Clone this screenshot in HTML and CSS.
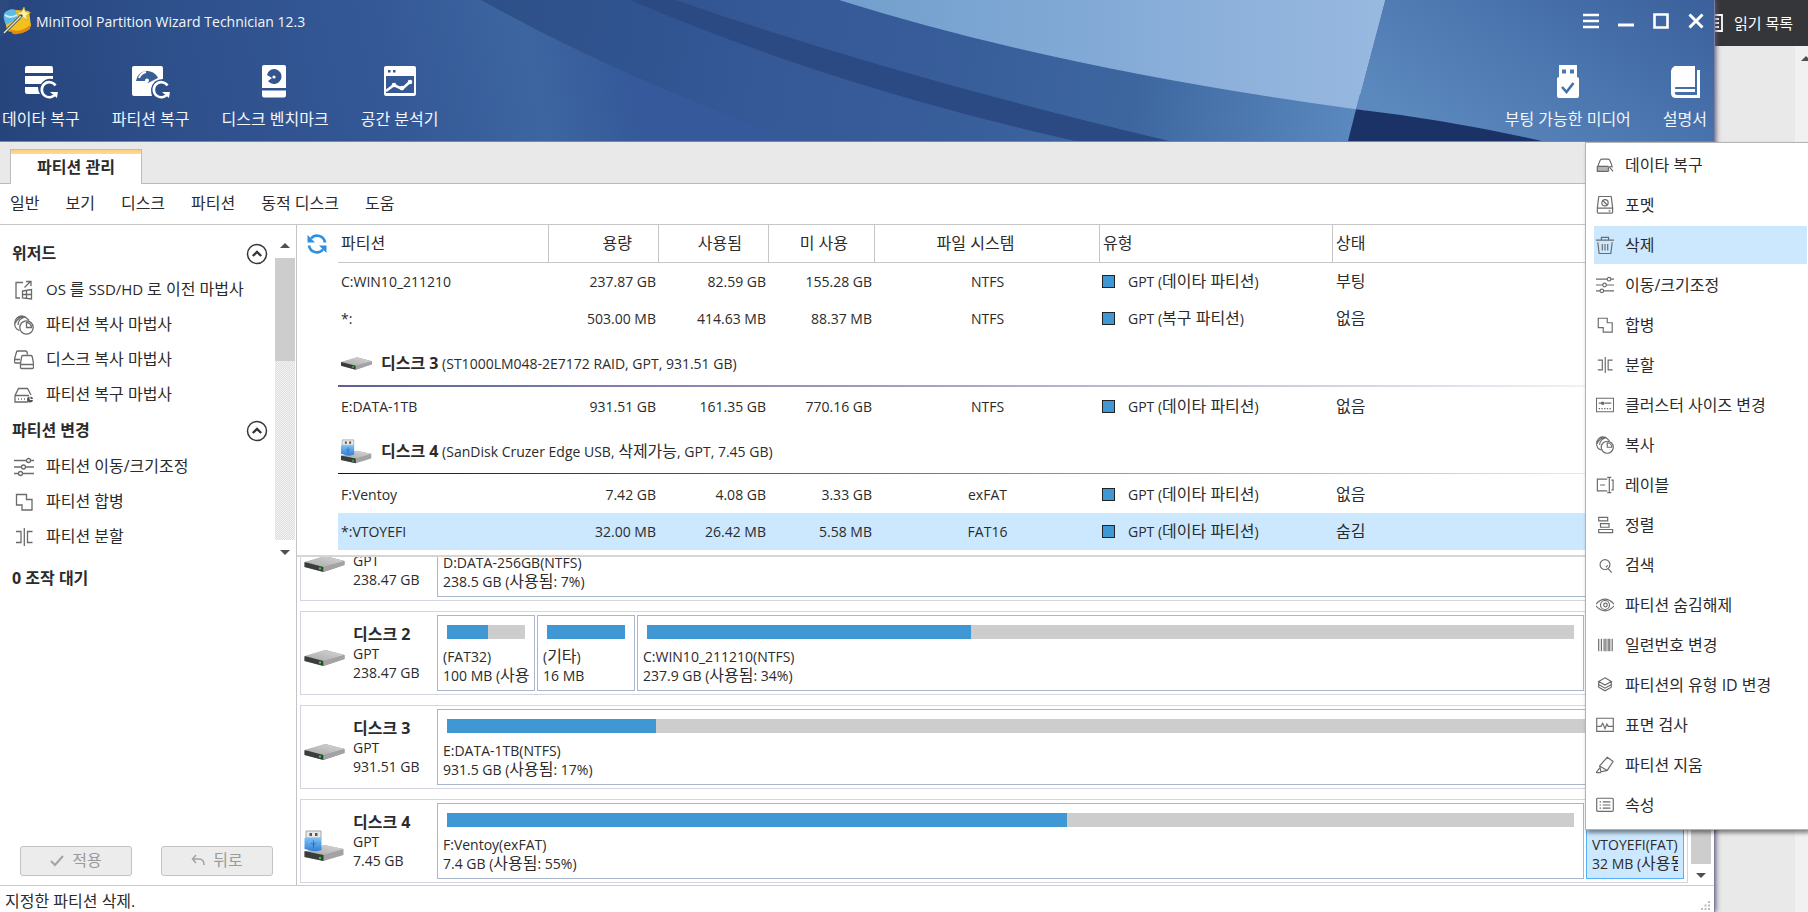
FILE: index.html
```html
<!DOCTYPE html>
<html lang="ko">
<head>
<meta charset="utf-8">
<title>MiniTool Partition Wizard Technician 12.3</title>
<link rel="stylesheet" href="styles.css">
</head>
<body>
<svg class="defs" aria-hidden="true">
  <defs>
    <linearGradient id="gTop" x1="0" x2="1" y1="1" y2="0"><stop offset="0" stop-color="#a9a9a9"/><stop offset="1" stop-color="#d6d6d6"/></linearGradient>
    <linearGradient id="gUsb" x1="0" x2="0" y1="0" y2="1"><stop offset="0" stop-color="#7cc0f2"/><stop offset="1" stop-color="#2f7fd6"/></linearGradient>
    <linearGradient id="gBase" gradientUnits="userSpaceOnUse" x1="0" x2="620" y1="142" y2="20"><stop offset="0" stop-color="#26447c"/><stop offset=".35" stop-color="#2f528e"/><stop offset=".62" stop-color="#345896"/><stop offset=".85" stop-color="#3d66a0"/><stop offset="1" stop-color="#35599a"/></linearGradient>
    <linearGradient id="gMid" gradientUnits="userSpaceOnUse" x1="480" x2="1350" y1="0" y2="141"><stop offset="0" stop-color="#2e5089"/><stop offset=".2" stop-color="#305490"/><stop offset=".33" stop-color="#355997"/><stop offset=".5" stop-color="#375c99"/><stop offset=".75" stop-color="#3d669f"/><stop offset="1" stop-color="#5a89bf"/></linearGradient>
    <linearGradient id="gLight" x1="0" x2="1" y1="0" y2="0"><stop offset="0" stop-color="#729fcd"/><stop offset=".4" stop-color="#80a8d5"/><stop offset="1" stop-color="#98b9e0"/></linearGradient>
    <linearGradient id="gRight" x1="0" x2="1" y1="0.6" y2="0"><stop offset="0" stop-color="#5b88bd"/><stop offset=".5" stop-color="#4a75ae"/><stop offset="1" stop-color="#3b609c"/></linearGradient>
  </defs>
  <symbol id="i-harddisk" viewBox="0 0 40 18"><path d="M0 8 21 1 40 6v4L19 17 0 12z" fill="#9c9c9c"/><path d="M0 7 20 1l20 5-21 6z" fill="url(#gTop)"/><path d="M0 7l19 5v5L0 12z" fill="#3b3d3c"/><path d="M19 12l21-6v4L19 17z" fill="#a3a3a3"/><circle cx="15.500" cy="13.500" r="1.200" fill="#21d13c"/></symbol>
  <symbol id="i-usbdisk" viewBox="0 0 40 32"><path d="M0 22 20 15l19 4v6L19 31 0 27z" fill="#a3a3a3"/><path d="M0 22 20 15l19 4-20 6z" fill="url(#gTop)"/><path d="M0 21l19 4v6L0 27z" fill="#3b3d3c"/><circle cx="15.500" cy="28" r="1.200" fill="#21d13c"/><path d="M1.500 1h15v7h-15z" fill="#e8e8e8" stroke="#a5a5a5"/><path d="M5 3h2.500v3H5zM10.500 3H13v3h-2.500z" fill="#555"/><path d="M0 8h17v12q-5 2-9 1l-8-2z" fill="url(#gUsb)"/><path d="M9 10.500v7.500M6.500 13l2.500 2M11.500 12.500 9 15" stroke="#2a70c4" fill="none"/></symbol>
  <symbol id="i-recover" viewBox="0 0 20 20"><path d="M2 11.500 4.500 5q.5-1.500 2-1.500h7q1.500 0 2 1.500L18 11.500" class="s"/><path d="M1 11h13v6H1z" fill="#b5b5b5"/><path d="M1.500 11v6H14M1.500 11.500H14" class="s"/><path d="M14.500 16.500a2.800 2.800 0 0 1 4-4M15.500 13l3.500 4" class="s"/></symbol>
  <symbol id="i-restore" viewBox="0 0 20 20"><path d="M1 10.500 4.500 3.500h9L17 10M1 10.500h14M1 10.500v6.500h13M4 14h1M7 14h1M10 14h1" class="s"/><circle cx="16" cy="14.500" r="3" fill="#555"/><path d="M16 11v3.500h3.500" stroke="#fff" fill="none"/></symbol>
  <symbol id="i-format" viewBox="0 0 20 20"><path d="M3 1q.2-.5 1-.5h12q.8 0 1 .5l1.500 12.500V18q0 1-1 1h-15q-1 0-1-1v-4.500zM1.500 13.500h17M14 16.500h2" class="s"/><circle cx="10" cy="7.500" r="3.500" class="s"/><path d="M7.500 5l5 5" class="s"/></symbol>
  <symbol id="i-trash" viewBox="0 0 20 20"><path d="M0 4.500h20M6 4V1.500h8V4M2 7l1.500 12.500h13L18 7M7 9v7M10 9v7M13 9v7" class="s"/></symbol>
  <symbol id="i-sliders" viewBox="0 0 20 20"><path d="M0 3.500h12.500M16.500 3.500H20M0 10h7.500M11.500 10H20M0 16.500h4.500M8.500 16.500H20" class="s"/><circle cx="14.500" cy="3.500" r="2" class="s"/><circle cx="9.500" cy="10" r="2" class="s"/><circle cx="6.500" cy="16.500" r="2" class="s"/></symbol>
  <symbol id="i-merge" viewBox="0 0 20 20"><path d="M2.500 2.500h10v5h5.500v10.500h-10v-5H2.500z" class="s"/></symbol>
  <symbol id="i-split" viewBox="0 0 20 20"><path d="M2 4.500h5v11H2M18.500 4.500h-5v11h5M10.300 1v18" class="s"/></symbol>
  <symbol id="i-cluster" viewBox="0 0 20 20"><path d="M.5 2.500h19v15H.5zM3 8h4M10 8h7M3 14h1.500M6 14h1.500M9 14h1.500M12 14h1.500M15 14h1.500" class="s"/><circle cx="7.500" cy="8" r="2" fill="#6b6b6b"/></symbol>
  <symbol id="i-copy" viewBox="0 0 20 20"><circle cx="12.500" cy="12.500" r="6.700" class="s"/><path d="M12.500 7.500v5h5a5 5 0 0 0-5-5zM5.500 15.500A7 7 0 0 1 .8 8 7 7 0 0 1 7.500 1Q11 1 13 3.500L15 5.500M4 10q0-6 7-8M1 8.500q3-6 8-7" class="s"/></symbol>
  <symbol id="i-diskcopy" viewBox="0 0 20 20"><path d="M6 13H1.500q-1 0-1-1V9l2-7q.3-1 1.300-1h8q1 0 1.200 1l.5 2.500M.8 9.500H6M9 5.500h8q1 0 1.200 1l1.300 7v4q0 1-1 1h-11q-1 0-1-1v-4l1.200-7q.3-1 1.300-1zM6.500 14.500h13" class="s"/></symbol>
  <symbol id="i-migrate" viewBox="0 0 20 20"><path d="M9 2.500H2v15.500h4M10.500 7.500l6-6M12 1.500h5V6M8.500 11l9-1.500V19l-9-1zM12.500 10.500v8M8.500 14.500h9" class="s"/></symbol>
  <symbol id="i-label" viewBox="0 0 20 20"><path d="M12.500 3.500h-11v13h11M4.500 10h5.500M17 4.500h2v11h-2M12.500 1.500h4.500M12.500 18.500h4.500M14.800 1.500v17" class="s"/></symbol>
  <symbol id="i-align" viewBox="0 0 20 20"><path d="M3 1.500h10v4H3zM5 8.500h9.500v4H5zM3 15h15.500v3.500H3z" class="s"/></symbol>
  <symbol id="i-search" viewBox="0 0 20 20"><circle cx="10" cy="9.500" r="5.500" class="s"/><path d="M13.500 14l4 4.500M11 12.500l2-2" class="s"/></symbol>
  <symbol id="i-eye" viewBox="0 0 20 20"><path d="M-1 10Q10-3 21 10 10 23-1 10z" class="s"/><circle cx="10" cy="10" r="5" class="s"/><circle cx="10.500" cy="10" r="2" class="s"/></symbol>
  <symbol id="i-barcode" viewBox="0 0 20 20"><path d="M3 3v14M6 3v14M9 3v14M11 3v14M13.500 3v14M15.300 3v14M18 3v14" class="s"/></symbol>
  <symbol id="i-layers" viewBox="0 0 20 20"><path d="M10 2l7 4-7 4-7-4zM3 9.500l7 4 7-4M3 12.500l7 4 7-4M3 6v6.500M17 6v6.500" class="s"/></symbol>
  <symbol id="i-surface" viewBox="0 0 20 20"><path d="M.8 2.500h18.400v14.500H.8zM1.500 11.500h4l2-3.500 2.500 6 2-5 1.500 2.500h5" class="s"/></symbol>
  <symbol id="i-erase" viewBox="0 0 20 20"><path d="M12.500 1.500 19 6l-6.500 10-7 1.500L4 11zM4 11l8.500 5M0 18.500h5.500M0 18.500 4.500 13" class="s"/></symbol>
  <symbol id="i-props" viewBox="0 0 20 20"><path d="M2 2.500h16q1.200 0 1.200 1.200v12q0 1.300-1.200 1.300H2Q.8 17 .8 15.700v-12Q.8 2.500 2 2.500zM4 6.500h1.500M4 10h1.500M4 13.500h1.500M7.500 6.500H16M7.500 10H16M7.500 13.500H16" class="s"/></symbol>
  <symbol id="i-up" viewBox="0 0 22 22"><circle cx="11" cy="11" r="9.500" fill="none" stroke="#35353d" stroke-width="1.500"/><path d="M6.800 13 11 9l4.200 4" fill="none" stroke="#35353d" stroke-width="2.400"/></symbol>
</svg>

<div class="desktop">
  <main class="app">
    <header class="banner">
      <svg class="waves" viewBox="0 0 1714 142" preserveAspectRatio="none" aria-hidden="true">
        <path d="M0 0h800v142H0z" fill="url(#gBase)"/>
        <path d="M0 0h10Q5 12 10 28L0 40z" fill="#2b4a80"/>
        <path d="M481 0Q620 78 797 142H1360V0z" fill="url(#gMid)"/>
        <path d="M630 0Q830 86 1075 142h94Q900 78 675 0z" fill="#2b4983"/>
        <path d="M839 0Q1060 70 1356 110L1385 0z" fill="url(#gLight)"/>
        <path d="M1385 0h329v142H1540L1356 110z" fill="url(#gRight)"/>
        <path d="M1356 110Q1450 121 1542 142H1348z" fill="#1b3266"/>
      </svg>
      <div class="titlebar">
        <svg class="logo" viewBox="0 0 28 28" aria-hidden="true"><path d="M1 7Q5 1 13 3l13 1 2 15q-4 7-13 7L4 24z" fill="#f4c01c"/><path d="M1 7Q5 1 13 3l1 9L3 18Q0 12 1 7z" fill="#5fb9e6"/><path d="M2 8q5 4 12 0" stroke="#c9edfb" stroke-width="2" fill="none"/><path d="M6 22q10 5 21-4l0 4q-8 6-17 5z" fill="#e08a10"/><path d="M21 0l1.500 5 5 .5-4 3 1 5-4-3-4 2.500 1-4.500-4-3 5-.5z" fill="#fdf3a0" stroke="#c9a51a" stroke-width=".7"/><path d="M1 26 19 8" stroke="#2b4150" stroke-width="3"/><path d="M1 26 18 9" stroke="#dfe6e8" stroke-width="1.500"/></svg>
        <h1 class="title">MiniTool Partition Wizard Technician 12.3</h1>
        <div class="winbtns">
          <button aria-label="메뉴"><svg viewBox="0 0 16 16"><path d="M0 2h16M0 8h16M0 14h16" stroke="#fff" stroke-width="2.600"/></svg></button>
          <button aria-label="최소화"><svg viewBox="0 0 16 16"><path d="M0 12h16" stroke="#fff" stroke-width="3"/></svg></button>
          <button aria-label="최대화"><svg viewBox="0 0 16 16"><path d="M1.500 1.500h13v13h-13z" fill="none" stroke="#fff" stroke-width="2.600"/></svg></button>
          <button aria-label="닫기"><svg viewBox="0 0 16 16"><path d="M1.500 1.500l13 13M14.500 1.500l-13 13" stroke="#fff" stroke-width="3"/></svg></button>
        </div>
      </div>
      <nav class="tools">
        <button class="tool"><svg class="wide" viewBox="0 0 38 34"><path d="M5 1h24a2 2 0 0 1 2 2v5H3V3a2 2 0 0 1 2-2zM3 11h28v3q-8-1-12 5H3zM3 22h13q0 4 2 7H5a2 2 0 0 1-2-2z" fill="#fff"/><path d="M33.500 20.500a7.500 7.500 0 1 0 .5 7.500" fill="none" stroke="#fff" stroke-width="2.600"/><path d="M28 27h8v-1l-1 7z" fill="#fff"/></svg>데이타 복구</button>
        <button class="tool"><svg class="wide" viewBox="0 0 38 34"><path d="M2 1h27a2 2 0 0 1 2 2v11q-10 0-12 10 0 4 1 7H2a2 2 0 0 1-2-2V3a2 2 0 0 1 2-2z" fill="#fff"/><path d="M4 16A11.500 11.500 0 0 1 26 13L16 18a3 3 0 0 0-4-2z" fill="#3a5d94"/><circle cx="15" cy="15.500" r="2" fill="#fff"/><path d="M7 13q2-5 7-6" stroke="#fff" stroke-width="2" fill="none"/><path d="M35.500 20.500a7.500 7.500 0 1 0 .5 7.500" fill="none" stroke="#fff" stroke-width="2.600"/><path d="M30 27h8v-1l-1 7z" fill="#fff"/></svg>파티션 복구</button>
        <button class="tool"><svg viewBox="0 0 34 34"><path d="M6 0h20a2 2 0 0 1 2 2v21H4V2a2 2 0 0 1 2-2zM4 25.500h24v5a2 2 0 0 1-2 2H6a2 2 0 0 1-2-2z" fill="#fff"/><path d="M16 4a7.500 7.500 0 1 1-6 12l4-3-5-3A8 8 0 0 1 16 4z" fill="#34568f"/><circle cx="16" cy="12" r="1.600" fill="#fff"/></svg>디스크 벤치마크</button>
        <button class="tool"><svg viewBox="0 0 34 34"><path d="M3 1h28a2 2 0 0 1 2 2v26a2 2 0 0 1-2 2H3a2 2 0 0 1-2-2V3a2 2 0 0 1 2-2zM3 11v17h28V11z" fill="#fff" fill-rule="evenodd"/><path d="M5 5h2.500v2.500H5zM10 5h2.500v2.500H10z" fill="#34568f"/><path d="M3 26l8-6 8 4 9-8" fill="none" stroke="#fff" stroke-width="2.600"/><circle cx="11" cy="20" r="2.300" fill="#fff"/><circle cx="19" cy="23" r="2.300" fill="#fff"/><circle cx="27" cy="17" r="2.300" fill="#fff"/></svg>공간 분석기</button>
        <span class="grow"></span>
        <button class="tool"><svg viewBox="0 0 34 34"><path d="M8 0h18v12H8zM11 4.500v4h4v-4zM19 4.500v4h4v-4z" fill="#fff" fill-rule="evenodd"/><path d="M8 12h18a2 2 0 0 1 2 2v17a2 2 0 0 1-2 2H8a2 2 0 0 1-2-2V14a2 2 0 0 1 2-2z" fill="#fff"/><path d="M11 22l4.500 5 7-9" fill="none" stroke="#4270ab" stroke-width="2.600"/></svg>부팅 가능한 미디어</button>
        <button class="tool"><svg viewBox="0 0 34 34"><path d="M7 1h20v21H7q-2 0-2 1.500V5q0-4 2-4zM29 5h3v28H8q-5 0-5-5V6q1-5 6-5v3l-2 20q-1 6 2 6h20z" fill="#fff"/><path d="M6 25.500h21" stroke="#fff" stroke-width="3"/></svg>설명서</button>
      </nav>
    </header>

    <div class="tabs"><button class="tab">파티션 관리</button></div>
    <nav class="menubar">
      <button>일반</button><button>보기</button><button>디스크</button><button>파티션</button><button>동적 디스크</button><button>도움</button>
    </nav>

    <div class="work">
      <aside class="side">
        <div class="side-top">
          <div class="groups">
            <h2 class="group">위저드<button aria-label="접기"><svg><use href="#i-up"/></svg></button></h2>
            <button class="act"><svg><use href="#i-migrate"/></svg><span class="mix">OS <span class="ko">를</span> SSD/HD <span class="ko">로 이전 마법사</span></span></button>
            <button class="act"><svg><use href="#i-copy"/></svg>파티션 복사 마법사</button>
            <button class="act"><svg><use href="#i-diskcopy"/></svg>디스크 복사 마법사</button>
            <button class="act"><svg><use href="#i-restore"/></svg>파티션 복구 마법사</button>
            <h2 class="group second">파티션 변경<button aria-label="접기"><svg><use href="#i-up"/></svg></button></h2>
            <button class="act"><svg><use href="#i-sliders"/></svg>파티션 이동/크기조정</button>
            <button class="act"><svg><use href="#i-merge"/></svg>파티션 합병</button>
            <button class="act"><svg><use href="#i-split"/></svg>파티션 분할</button>
          </div>
          <div class="bar"><i class="tri"></i><i class="thumb"></i><i class="track"></i><i class="tri down"></i></div>
        </div>
        <h2 class="pending">0 조작 대기</h2>
        <div class="btns">
          <button disabled><svg viewBox="0 0 14 14"><path d="M1 8l4 4 8-9" fill="none" stroke="#a3a3a3" stroke-width="2"/></svg>적용</button>
          <button disabled><svg viewBox="0 0 14 14"><path d="M5 2 1.500 6 5 10M2 6h6q5 0 5 6" fill="none" stroke="#a3a3a3" stroke-width="1.500"/></svg>뒤로</button>
        </div>
      </aside>

      <section class="content">
        <div class="listing">
          <button class="refresh" aria-label="새로 고침"><svg viewBox="0 0 20 20"><path d="M4 4.500a8 8 0 0 1 14 4M16 15.500a8 8 0 0 1-14-4" fill="none" stroke="#2f8fe0" stroke-width="2.600"/><path d="M.5 1v7.500H8zM19.500 19v-7.500H12z" fill="#2f8fe0"/></svg></button>
          <table class="parts">
            <colgroup><col class="c-name"><col class="c-num"><col class="c-num"><col class="c-free"><col class="c-fs"><col class="c-type"><col></colgroup>
            <thead><tr><th>파티션</th><th class="r">용량</th><th class="r">사용됨</th><th class="r">미 사용</th><th class="fs">파일 시스템</th><th>유형</th><th>상태</th></tr></thead>
            <tbody>
              <tr><td>C:WIN10_211210</td><td class="r">237.87 GB</td><td class="r">82.59 GB</td><td class="r">155.28 GB</td><td class="m">NTFS</td><td class="t"><i class="sq"></i>GPT (<span class="ko">데이타 파티션</span>)</td><td class="ko">부팅</td></tr>
              <tr><td>*:</td><td class="r">503.00 MB</td><td class="r">414.63 MB</td><td class="r">88.37 MB</td><td class="m">NTFS</td><td class="t"><i class="sq"></i>GPT (<span class="ko">복구 파티션</span>)</td><td class="ko">없음</td></tr>
              <tr class="disk"><td colspan="7"><div class="dhead"><svg><use href="#i-harddisk"/></svg><span><b>디스크 3</b> (ST1000LM048-2E7172 RAID, GPT, 931.51 GB)</span></div></td></tr>
              <tr><td>E:DATA-1TB</td><td class="r">931.51 GB</td><td class="r">161.35 GB</td><td class="r">770.16 GB</td><td class="m">NTFS</td><td class="t"><i class="sq"></i>GPT (<span class="ko">데이타 파티션</span>)</td><td class="ko">없음</td></tr>
              <tr class="disk dark"><td colspan="7"><div class="dhead"><svg class="usb"><use href="#i-usbdisk"/></svg><span><b>디스크 4</b> (SanDisk Cruzer Edge USB, <span class="ko">삭제가능</span>, GPT, 7.45 GB)</span></div></td></tr>
              <tr><td>F:Ventoy</td><td class="r">7.42 GB</td><td class="r">4.08 GB</td><td class="r">3.33 GB</td><td class="m">exFAT</td><td class="t"><i class="sq"></i>GPT (<span class="ko">데이타 파티션</span>)</td><td class="ko">없음</td></tr>
              <tr class="sel"><td>*:VTOYEFI</td><td class="r">32.00 MB</td><td class="r">26.42 MB</td><td class="r">5.58 MB</td><td class="m">FAT16</td><td class="t"><i class="sq"></i>GPT (<span class="ko">데이타 파티션</span>)</td><td class="ko">숨김</td></tr>
            </tbody>
          </table>
        </div>

        <div class="map">
          <div class="cards">
            <div class="card"><svg class="dicon"><use href="#i-harddisk"/></svg><p class="info">GPT<br>238.47 GB</p>
              <div class="vols"><div class="vol"><div class="meter"><i style="width:7%"></i></div>D:DATA-256GB(NTFS)<br>238.5 GB (<span class="ko">사용됨</span>: 7%)</div></div></div>
            <div class="card"><svg class="dicon"><use href="#i-harddisk"/></svg><p class="info"><b>디스크 2</b>GPT<br>238.47 GB</p>
              <div class="vols"><div class="vol small"><div class="meter"><i style="width:53%"></i></div>(FAT32)<br>100 MB (<span class="ko">사용</span></div><div class="vol small"><div class="meter"><i style="width:100%"></i></div>(<span class="ko">기타</span>)<br>16 MB</div><div class="vol"><div class="meter"><i style="width:35%"></i></div>C:WIN10_211210(NTFS)<br>237.9 GB (<span class="ko">사용됨</span>: 34%)</div><div class="vol small"></div></div></div>
            <div class="card"><svg class="dicon"><use href="#i-harddisk"/></svg><p class="info"><b>디스크 3</b>GPT<br>931.51 GB</p>
              <div class="vols"><div class="vol"><div class="meter"><i style="width:17%"></i></div>E:DATA-1TB(NTFS)<br>931.5 GB (<span class="ko">사용됨</span>: 17%)</div></div></div>
            <div class="card"><svg class="dicon usb"><use href="#i-usbdisk"/></svg><p class="info"><b>디스크 4</b>GPT<br>7.45 GB</p>
              <div class="vols"><div class="vol"><div class="meter"><i style="width:55%"></i></div>F:Ventoy(exFAT)<br>7.4 GB (<span class="ko">사용됨</span>: 55%)</div><div class="vol small on"><div class="meter"><i style="width:83%"></i></div>VTOYEFI(FAT)<br>32 MB (<span class="ko">사용됨</span></div></div></div>
          </div>
          <div class="bar"><i class="tri"></i><i class="thumb full"></i><i class="tri down"></i></div>
        </div>
      </section>
    </div>

    <footer class="status">지정한 파티션 삭제.
      <svg class="grip" viewBox="0 0 10 10" aria-hidden="true"><path d="M7 0h2v2H7zM3.500 3.500h2v2h-2zM7 3.500h2v2H7zM0 7h2v2H0zM3.500 7h2v2h-2zM7 7h2v2H7z" fill="#bdbdbd"/></svg>
    </footer>
  </main>

  <aside class="browser">
    <div class="reading"><svg viewBox="0 0 8 20" aria-hidden="true"><path d="M0 2h7v16H0M0 6h4M0 10h4M0 14h4" fill="none" stroke="#fff" stroke-width="1.800"/></svg>읽기 목록</div>
    <div class="page"><div class="pagebar"><i class="tri"></i></div></div>
  </aside>

  <div class="popup" role="menu">
    <button role="menuitem"><svg><use href="#i-recover"/></svg>데이타 복구</button>
    <button role="menuitem"><svg><use href="#i-format"/></svg>포멧</button>
    <button role="menuitem" class="hot"><svg><use href="#i-trash"/></svg>삭제</button>
    <button role="menuitem"><svg><use href="#i-sliders"/></svg>이동/크기조정</button>
    <button role="menuitem"><svg><use href="#i-merge"/></svg>합병</button>
    <button role="menuitem"><svg><use href="#i-split"/></svg>분할</button>
    <button role="menuitem"><svg><use href="#i-cluster"/></svg>클러스터 사이즈 변경</button>
    <button role="menuitem"><svg><use href="#i-copy"/></svg>복사</button>
    <button role="menuitem"><svg><use href="#i-label"/></svg>레이블</button>
    <button role="menuitem"><svg><use href="#i-align"/></svg>정렬</button>
    <button role="menuitem"><svg><use href="#i-search"/></svg>검색</button>
    <button role="menuitem"><svg><use href="#i-eye"/></svg>파티션 숨김해제</button>
    <button role="menuitem"><svg><use href="#i-barcode"/></svg>일련번호 변경</button>
    <button role="menuitem"><svg><use href="#i-layers"/></svg>파티션의 유형 ID 변경</button>
    <button role="menuitem"><svg><use href="#i-surface"/></svg>표면 검사</button>
    <button role="menuitem"><svg><use href="#i-erase"/></svg>파티션 지움</button>
    <button role="menuitem"><svg><use href="#i-props"/></svg>속성</button>
  </div>
</div>
</body>
</html>
```
FILE: styles.css
```css
* { box-sizing: border-box; }
body {
  margin: 0;
  font: 14px/19px "Open Sans", "Noto Sans CJK KR", sans-serif;
  color: #2b2b2b;
}
button {
  font: inherit;
  color: inherit;
  background: none;
  border: 0;
  padding: 0;
  white-space: nowrap;
}
h1, h2, p { margin: 0; }
svg { flex: none; overflow: visible; }
.defs { position: absolute; width: 0; height: 0; }
.s { fill: none; stroke: #6b6b6b; stroke-width: 1.3; }
.ko { font-size: 16px; }
.grow { flex: 1; }

.desktop { position: relative; display: flex; height: 100vh; overflow: hidden; }
.app {
  position: relative;
  z-index: 1;
  flex: 1;
  min-width: 0;
  display: flex;
  flex-direction: column;
  background: #fff;
  border-right: 1px solid #7d7da0;
  box-shadow: 1px 0 5px #5b5b78;
}

/* banner */
.banner { position: relative; height: 142px; color: #f3f6fb; border-bottom: 1px solid #7285b4; }
.waves { position: absolute; inset: 0; width: 100%; height: 100%; }
.titlebar, .tools { position: relative; display: flex; }
.titlebar { align-items: center; height: 42px; padding: 0 10px 0 3px; gap: 5px; }
.logo { width: 28px; height: 28px; }
.title { font-size: 14px; font-weight: 400; flex: 1; }
.winbtns { display: flex; gap: 19px; }
.winbtns svg { display: block; width: 16px; height: 16px; }
.tools { padding: 23px 7px 0 2px; gap: 32px; font-size: 16px; }
.tool { display: flex; flex-direction: column; align-items: center; gap: 9px; line-height: 22px; }
.tool svg { width: 34px; height: 34px; }
.tool .wide { width: 38px; }

/* tabs and menu */
.tabs { display: flex; align-items: flex-end; height: 42px; padding-left: 10px; background: #e9e9e9; box-shadow: inset 0 -1px #bbb; }
.tab {
  width: 132px;
  height: 35px;
  border: 1px solid #bdbdbd;
  border-bottom: 0;
  background: linear-gradient(#f9cf7c, #fbdb9b) 0 0 / 100% 4px no-repeat #fff;
  font-size: 16px;
  font-weight: 700;
}
.menubar { display: flex; gap: 26px; height: 41px; padding: 0 10px 2px; border-bottom: 1px solid #c6c6c6; font-size: 16px; }

/* sidebar */
.work { display: flex; flex: 1; min-height: 0; }
.side { display: flex; flex-direction: column; width: 297px; border-right: 1px solid #c4c4c4; border-bottom: 1px solid #ccc; font-size: 16px; }
.side-top { display: flex; padding-top: 10px; }
.groups { flex: 1; display: flex; flex-direction: column; padding-left: 12px; }
.group { display: flex; align-items: center; justify-content: space-between; height: 37px; padding-right: 7px; font-size: 16px; }
.group button, .group svg { display: block; width: 22px; height: 22px; }
.act { display: flex; align-items: center; gap: 12px; height: 35px; padding-left: 2px; }
.act svg { width: 20px; height: 20px; }
.mix { font-size: 15px; }
.bar { display: flex; flex-direction: column; align-items: center; gap: 9px; width: 21px; }
.side .bar { padding-top: 8px; padding-right: 1px; gap: 0; height: 320px; }
.tri { width: 0; height: 0; border: 5px solid transparent; border-top: 0; border-bottom: 5px solid #505050; }
.tri.down { border-top: 5px solid #505050; border-bottom: 0; }
.thumb { width: 20px; height: 103px; margin-top: 10px; background: #cdcdcd; }
.track { flex: 1; width: 20px; margin-bottom: 10px; background: repeating-conic-gradient(#dedede 0 25%, #f3f3f3 0 50%) 0 0 / 2px 2px; }
.pending { padding: 11px 12px; font-size: 16px; line-height: 24px; }
.btns { display: flex; gap: 29px; margin-top: auto; padding: 0 20px 9px; }
.btns button {
  display: flex;
  align-items: center;
  justify-content: center;
  gap: 8px;
  width: 112px;
  height: 30px;
  padding-bottom: 2px;
  border: 1px solid #c3c3c3;
  border-radius: 3px;
  background: #ececec;
  color: #9a9a9a;
}
.btns svg { width: 14px; height: 14px; }

/* partition list */
.content { flex: 1; min-width: 0; display: flex; flex-direction: column; border-bottom: 1px solid #ccc; }
.listing { display: flex; align-items: flex-start; height: 332px; padding-bottom: 5px; border-bottom: 2px solid #d6d6d6; }
.refresh { width: 41px; height: 37px; padding-left: 10px; }
.refresh svg { display: block; width: 20px; height: 20px; }
.parts { flex: 1; table-layout: fixed; border-collapse: separate; border-spacing: 0; width: 100%; }
.c-name { width: 211px; }
.c-num { width: 110px; }
.c-free { width: 106px; }
.c-fs { width: 225px; }
.c-type { width: 233px; }
.parts th { height: 38px; padding: 0 3px; border-right: 1px solid #c6c6c6; border-bottom: 1px solid #c6c6c6; font-size: 16px; font-weight: 400; text-align: left; }
.parts th.r { padding-right: 26px; text-align: right; }
.parts th.fs { padding-right: 26px; text-align: center; }
.parts td { height: 37px; padding: 0 3px; white-space: nowrap; }
.parts .r { text-align: right; }
.parts .m { text-align: center; }
.parts .t { padding-left: 2px; }
.sq { display: inline-block; width: 13px; height: 13px; margin-right: 13px; border: 1px solid #222; background: #3f98d3; vertical-align: -1px; }
.parts .disk td { height: 51px; background: linear-gradient(90deg, #5f5f94, #fff) 0 48px / 100% 2px no-repeat; }
.parts .dark td { background: linear-gradient(90deg, #10103e, #fff) 0 48px / 100% 1px no-repeat; }
.sel td { background: #cce8ff; }
.dhead { display: flex; align-items: center; gap: 9px; padding-top: 2px; }
.dhead svg { width: 31px; height: 15px; }
.dhead .usb { height: 25px; }
b { font-size: 16px; }

/* disk map */
.map { flex: 1; min-height: 0; display: flex; overflow: hidden; }
.cards { flex: 1; min-width: 0; display: flex; flex-direction: column; justify-content: flex-end; gap: 10px; padding: 0 2px 2px 3px; }
.card { flex: none; display: flex; align-items: center; height: 84px; padding: 3px 3px 3px 3px; border: 1px solid #d5d5e2; }
.card:first-child .info { align-self: flex-end; padding-bottom: 8px; }
.dicon { width: 41px; height: 18px; margin-top: 9px; }
.dicon.usb { height: 32px; }
.info { width: 92px; padding-left: 8px; }
.info b { display: block; }
.vols { flex: 1; min-width: 0; align-self: stretch; display: flex; gap: 2px; }
.vol { flex: 1; min-width: 0; padding: 9px 9px 0 5px; border: 1px solid #a9b7cd; white-space: nowrap; overflow: clip; overflow-clip-margin: content-box; }
.vol.small { flex: none; width: 98px; padding-right: 5px; }
.small .meter { margin-right: 4px; }
.meter { height: 14px; margin: 0 0 8px 4px; background: #cdcdcd; }
.meter i { display: block; height: 100%; background: #3f98d3; }
.vol.on { background: #cce8ff; border-color: #55b0fb; }
.map .bar { padding: 8px 2px 7px 0; width: 24px; }
.thumb.full { flex: 1; margin: 0; }

.status { position: relative; height: 26px; padding: 2px 5px; font-size: 16px; line-height: 26px; }
.grip { position: absolute; right: 3px; bottom: 1px; width: 10px; height: 10px; }

/* window behind */
.browser { width: 93px; display: flex; flex-direction: column; }
.reading { display: flex; align-items: center; gap: 11px; height: 46px; background: #35363a; color: #fff; font-size: 15px; white-space: nowrap; }
.reading svg { width: 8px; height: 20px; }
.page { flex: 1; display: flex; justify-content: flex-end; background: #e9e9e9; }
.pagebar { width: 13px; padding: 10px 0 0 6px; background: #f1f1f1; overflow: hidden; }
.pagebar .tri { display: block; }

/* context menu */
.popup {
  position: absolute;
  z-index: 2;
  top: 142px;
  right: 0;
  width: 223px;
  padding: 3px 1px 5px 8px;
  display: flex;
  flex-direction: column;
  gap: 2px;
  background: #fff;
  border: 1px solid #b4b4b4;
  border-right: 0;
  box-shadow: 2px 3px 4px rgba(0, 0, 0, .45);
  font-size: 16px;
}
.popup button { display: flex; align-items: center; gap: 11px; height: 38px; padding-left: 2px; }
.popup svg { width: 18px; height: 18px; }
.popup .hot { background: #cce8ff; }
```
